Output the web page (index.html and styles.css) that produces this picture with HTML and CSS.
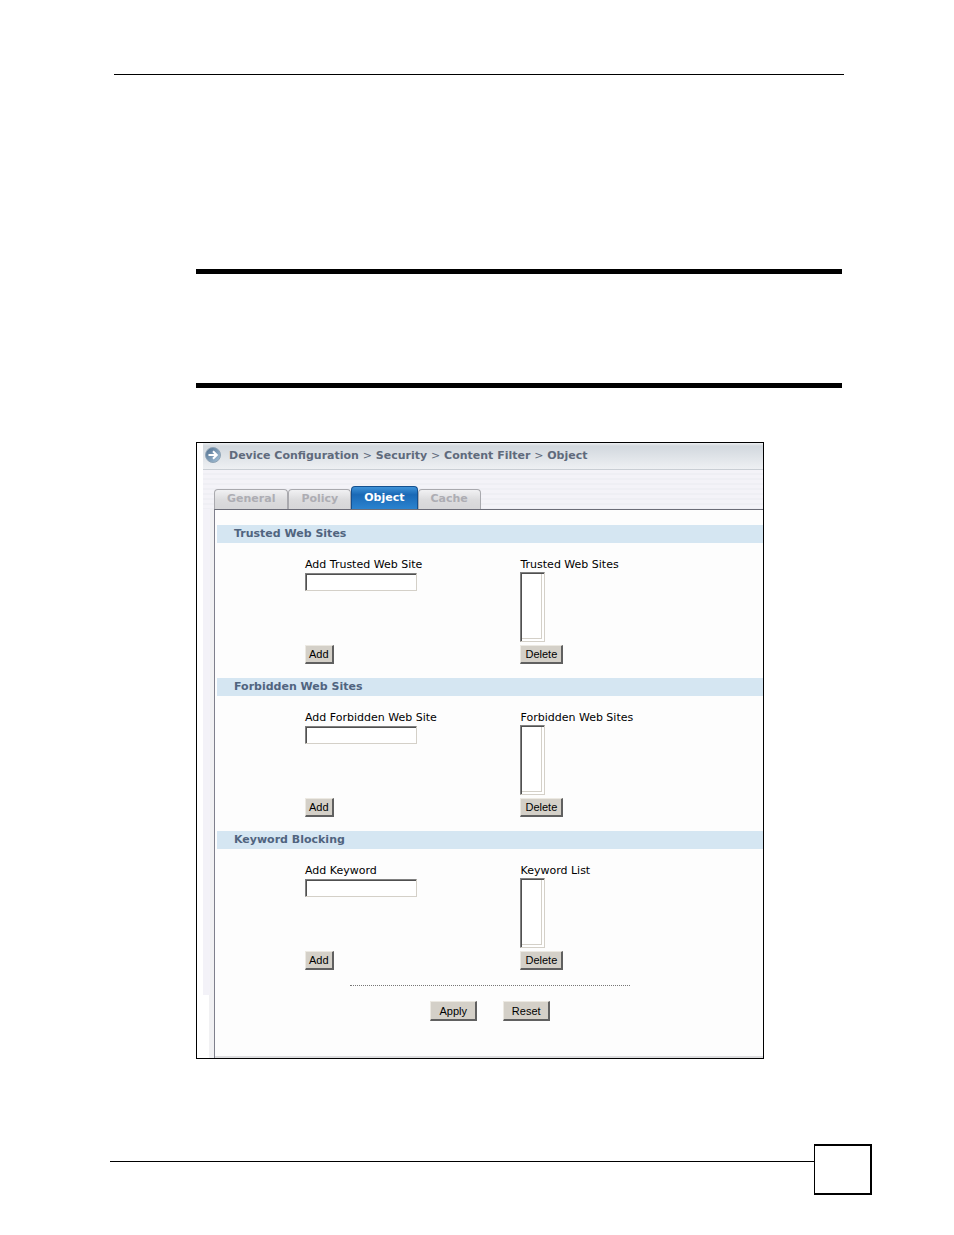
FILE: index.html
```
<!DOCTYPE html>
<html lang="en">
<head>
    <meta charset="UTF-8">
    <meta name="viewport" content="width=device-width, initial-scale=1.0">
    <link rel="stylesheet" href="styles.css">
    <title>Content Filter - Object</title>
</head>
<body>

    <header class="page-header"></header>

    <main class="main">
        <div class="note"></div>

        <div class="screen">
            <div class="breadcrumb">
                <svg class="crumb-icon" width="16" height="16" viewBox="0 0 16 16" aria-hidden="true">
                    <defs>
                        <linearGradient id="ball" x1="0" y1="0" x2="1" y2="1">
                            <stop offset="0" stop-color="#4d6c8c"/>
                            <stop offset="1" stop-color="#a9c6dc"/>
                        </linearGradient>
                    </defs>
                    <circle cx="8" cy="8" r="7.5" fill="url(#ball)" stroke="#8fa3b5"/>
                    <path d="M3.5 8H11M8 4.2L11.8 8L8 11.8" fill="none" stroke="#fff" stroke-width="2"/>
                </svg>
                <span>Device Configuration <i>&gt;</i> Security <i>&gt;</i> Content Filter <i>&gt;</i> Object</span>
            </div>

            <nav class="tabs">
                <a href="#" class="tab">General</a>
                <a href="#" class="tab">Policy</a>
                <a href="#" class="tab active">Object</a>
                <a href="#" class="tab">Cache</a>
            </nav>

            <form class="panel">
                <h2 class="section-title">Trusted Web Sites</h2>
                <div class="section">
                    <div class="field">
                        <label for="add-trusted">Add Trusted Web Site</label>
                        <input type="text" id="add-trusted">
                        <button type="button">Add</button>
                    </div>
                    <div class="field">
                        <label for="trusted-list">Trusted Web Sites</label>
                        <select id="trusted-list" size="4"></select>
                        <button type="button">Delete</button>
                    </div>
                </div>

                <h2 class="section-title">Forbidden Web Sites</h2>
                <div class="section">
                    <div class="field">
                        <label for="add-forbidden">Add Forbidden Web Site</label>
                        <input type="text" id="add-forbidden">
                        <button type="button">Add</button>
                    </div>
                    <div class="field">
                        <label for="forbidden-list">Forbidden Web Sites</label>
                        <select id="forbidden-list" size="4"></select>
                        <button type="button">Delete</button>
                    </div>
                </div>

                <h2 class="section-title">Keyword Blocking</h2>
                <div class="section">
                    <div class="field">
                        <label for="add-keyword">Add Keyword</label>
                        <input type="text" id="add-keyword">
                        <button type="button">Add</button>
                    </div>
                    <div class="field">
                        <label for="keyword-list">Keyword List</label>
                        <select id="keyword-list" size="4"></select>
                        <button type="button">Delete</button>
                    </div>
                </div>

                <hr class="divider">
                <div class="form-actions">
                    <button type="button">Apply</button>
                    <button type="reset">Reset</button>
                </div>
            </form>
        </div>
    </main>

    <footer class="page-footer">
        <div class="footer-line"></div>
        <div class="page-number"></div>
    </footer>

</body>
</html>
```
FILE: styles.css
```
body {
    margin: 0;
    background-color: #fff;
    font-family: "DejaVu Sans", Verdana, sans-serif;
    font-size: 11px;
    color: #000;
}

.page-header {
    margin: 0 110px 0 114px;
    padding-top: 74px;
    border-bottom: 1px solid #000;
}

.main {
    margin: 194px 112px 0 196px;
}

.note {
    height: 109px;
    border-top: 5px solid #000;
    border-bottom: 5px solid #000;
}

/* device screen */
.screen {
    box-sizing: border-box;
    width: 88%;
    margin-top: 54px;
    padding-left: 6px;
    border: 1px solid #000;
    /* the lilac strip stops short of the bottom, the grey one runs all the way */
    background:
        linear-gradient(#f3f2f8, #f3f2f8) 6px 0 / 7px calc(100% - 63px) no-repeat,
        linear-gradient(#f1f1f3, #f1f1f3) 12px 0 / 5px 100% no-repeat;
}

.breadcrumb {
    display: flex;
    align-items: center;
    gap: 8px;
    height: 25px;
    padding-left: 2px;
    padding-bottom: 1px;
    border-bottom: 1px solid #c9ced4;
    background: linear-gradient(#eef0f2 0, #d2d8de 3px, #eef0f3 100%);
    color: #5f6a7c;
    font-weight: bold;
    white-space: nowrap;
}

.breadcrumb i {
    font-style: normal;
    font-weight: normal;
}

.crumb-icon {
    margin-bottom: 2px;
}

.tabs {
    display: flex;
    align-items: flex-end;
    height: 39px;
    padding-left: 11px;
    background: repeating-linear-gradient(#f4f3f8 0, #f4f3f8 3px, #efeff4 3px, #efeff4 5px);
}

.tab {
    box-sizing: border-box;
    height: 20px;
    padding: 0 12px;
    border: 1px solid #a9a9ae;
    border-bottom: none;
    border-radius: 4px 4px 0 0;
    background: linear-gradient(#f1f1f3, #dcdcde 50%, #d6d6d8);
    color: #adadb3;
    font-weight: bold;
    line-height: 17px;
    text-decoration: none;
}

.tab.active {
    height: 23px;
    border-color: #14508f;
    background: linear-gradient(#3f93d8, #1a69b6 35%, #2b83cf);
    color: #fff;
    line-height: 22px;
}

.panel {
    margin-left: 11px;
    padding: 15px 0 37px 2px;
    border-top: 1px solid #6c6d78;
    border-left: 1px solid #7f808c;
    background-color: #fdfdfd;
    box-shadow: inset 0 -2px 0 #dddddf;
}

.section-title {
    margin: 0;
    padding-left: 17px;
    background-color: #d5e6f2;
    color: #50647f;
    font-size: 11px;
    line-height: 18px;
}

.section {
    display: grid;
    grid-template-columns: 47% 1fr;
    padding: 14px 0 14px 88px;
}

.field {
    display: grid;
    grid-template-rows: 15px 73px 19px;
    justify-items: start;
    align-items: start;
}

.field label {
    line-height: 15px;
    white-space: nowrap;
}

.field input,
.field select {
    box-sizing: border-box;
    border: 1px solid #d4d0c8;
    border-top-color: #808080;
    border-left-color: #808080;
    border-radius: 0;
    outline: none;
    background-color: #fff;
    box-shadow: inset 1px 1px 0 #505050;
}

.field input {
    width: 112px;
    height: 18px;
    margin-top: 1px;
    padding: 0 3px;
}

.field select {
    appearance: none;
    width: 25px;
    height: 70px;
    box-shadow: inset 1px 1px 0 #505050, inset -2px -2px 0 #fff, inset -3px -3px 0 #d4d0c8;
    overflow: hidden;
}

button {
    box-sizing: border-box;
    height: 19px;
    padding: 0 4px;
    border: 1px solid #ece9e2;
    border-right: 2px solid #606060;
    border-bottom: 2px solid #606060;
    background-color: #d4d0c8;
    color: #000;
    font-family: "Liberation Sans", Arial, sans-serif;
    font-size: 11px;
    line-height: 16px;
    cursor: pointer;
}

.field input + button {
    padding: 0 3px;
}

.divider {
    width: 280px;
    margin: 1px auto 0;
    border: none;
    border-top: 1px dotted #777;
}

.form-actions {
    display: flex;
    justify-content: center;
    gap: 26px;
    margin-top: 15px;
}

.form-actions button {
    width: 47px;
    height: 20px;
}

/* page bottom */
.page-footer {
    display: flex;
    align-items: flex-start;
    margin: 85px 82px 0 110px;
}

.footer-line {
    flex: 1;
    margin-top: 17px;
    border-top: 1px solid #000;
}

.page-number {
    width: 55px;
    height: 47px;
    border: 2px solid #000;
    border-left-width: 1px;
}
```
